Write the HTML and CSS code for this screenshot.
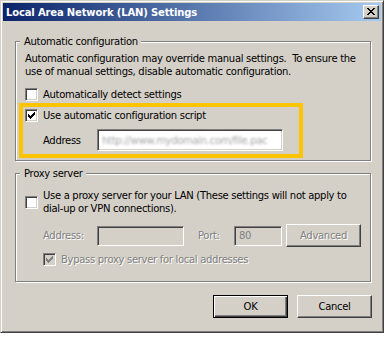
FILE: index.html
```html
<!DOCTYPE html>
<html>
<head>
<meta charset="utf-8">
<link rel="stylesheet" href="styles.css">
</head>
<body>
<div class="window">
  <div class="titlebar">
    <span class="title">Local Area Network (LAN) Settings</span>
    <span class="close"><svg width="8" height="7" viewBox="0 0 8 7" shape-rendering="crispEdges"><path d="M0 0h2v1H0zM6 0h2v1H6zM1 1h2v1H1zM5 1h2v1H5zM2 2h4v1H2zM3 3h2v1H3zM2 4h4v1H2zM1 5h2v1H1zM5 5h2v1H5zM0 6h2v1H0zM6 6h2v1H6z" fill="#000"/></svg></span>
  </div>
  <div class="content">
    <div class="group g1">
      <span class="legend">Automatic configuration</span>
      <p class="desc">Automatic configuration may override manual settings.&nbsp; To ensure the<br>use of manual settings, disable automatic configuration.</p>
      <div class="check row1"><span class="cb"></span><span>Automatically detect settings</span></div>
      <div class="highlight">
        <div class="check"><span class="cb"><svg width="7" height="7" viewBox="0 0 7 7" shape-rendering="crispEdges"><path d="M0 2H1V3H2V4H3V3H4V2H5V1H6V0H7V3H6V4H5V5H4V6H3V7H2V6H1V5H0Z" fill="#000"/></svg></span><span>Use automatic configuration script</span></div>
        <div class="addr">
          <span class="lbl">Address</span>
          <span class="input url"><span class="blur">http://www.mydomain.com/file.pac</span></span>
        </div>
      </div>
    </div>
    <div class="group g2">
      <span class="legend">Proxy server</span>
      <div class="check proxy"><span class="cb"></span><span>Use a proxy server for your LAN (These settings will not apply to<br>dial-up or VPN connections).</span></div>
      <div class="paddr">
        <span class="lbl dis">Address:</span>
        <span class="input off addrbox"></span>
        <span class="plbl dis">Port:</span>
        <span class="input off port"><span class="gray">80</span></span>
        <span class="btn adv"><span class="dis">Advanced</span></span>
      </div>
      <div class="check bypass"><span class="cb off"><svg width="7" height="7" viewBox="0 0 7 7" shape-rendering="crispEdges"><path d="M0 2H1V3H2V4H3V3H4V2H5V1H6V0H7V3H6V4H5V5H4V6H3V7H2V6H1V5H0Z" fill="#808080"/></svg></span><span class="dis">Bypass proxy server for local addresses</span></div>
    </div>
    <div class="buttons">
      <span class="btn default">OK</span>
      <span class="btn">Cancel</span>
    </div>
  </div>
</div>
</body>
</html>
```
FILE: styles.css
```css
body {
  margin: 0;
  background: #fff;
  font-family: "DejaVu Sans", sans-serif;
  font-size: 10px;
  letter-spacing: -0.3px;
  color: #000;
}
.window {
  width: 384px;
  height: 333px;
  box-sizing: border-box;
  background: #d4d0c8;
  border: 1px solid;
  border-color: #d4d0c8 #404040 #404040 #d4d0c8;
  box-shadow: inset 1px 1px #fff, inset -1px -1px #808080;
  padding: 2px;
  display: flex;
  flex-direction: column;
}
.titlebar {
  height: 18px;
  flex: none;
  background: linear-gradient(to right, #0a246a, #a6caf0);
  display: flex;
  align-items: center;
  justify-content: space-between;
  padding: 0 2px 0 3px;
}
.title {
  color: #fff;
  font-weight: bold;
  letter-spacing: -0.15px;
}
.close {
  width: 16px;
  height: 14px;
  box-sizing: border-box;
  background: #d4d0c8;
  border: 1px solid;
  border-color: #fff #404040 #404040 #fff;
  box-shadow: inset -1px -1px #808080;
  display: flex;
  justify-content: center;
  align-items: flex-start;
  padding-top: 2px;
}
.close svg { display: block; }
.content {
  flex: 1;
  display: flex;
  flex-direction: column;
  padding-left: 12px;
}
.group {
  width: 356px;
  box-sizing: border-box;
  border: 1px solid #808080;
  box-shadow: inset 1px 1px #fff, 1px 1px #fff;
  display: flex;
  flex-direction: column;
  align-items: flex-start;
  padding: 0 8px 0 9px;
}
.g1 { margin-top: 20px; height: 120px; }
.g2 { margin-top: 12px; height: 109px; }
.legend {
  margin: -7px 0 0 -5px;
  padding: 0 3px 0 4px;
  background: #d4d0c8;
  line-height: 13px;
  height: 13px;
}
.desc {
  margin: 4px 0 0;
  line-height: 13px;
}
.check {
  display: flex;
  align-items: center;
  gap: 5px;
  line-height: 13px;
}
.cb {
  width: 13px;
  height: 13px;
  box-sizing: border-box;
  flex: none;
  background: #fff;
  border: 1px solid;
  border-color: #808080 #fff #fff #808080;
  box-shadow: inset 1px 1px #404040, inset -1px -1px #d4d0c8;
  padding: 2px 0 0 2px;
}
.cb svg { display: block; }
.cb.off { background: #d4d0c8; }
.row1 { margin-top: 10px; }
.highlight {
  margin: 2px 0 0 -6px;
  width: 284px;
  box-sizing: border-box;
  border: 4px solid #ffc400;
  padding: 2px 0 3px 2px;
  display: flex;
  flex-direction: column;
}
.addr {
  display: flex;
  align-items: center;
  margin-top: 7px;
}
.lbl {
  margin-left: 18px;
  width: 54px;
}
.input {
  height: 22px;
  box-sizing: border-box;
  border: 1px solid;
  border-color: #808080 #fff #fff #808080;
  box-shadow: inset 1px 1px #404040, inset -1px -1px #d4d0c8;
  background: #fff;
  display: flex;
  align-items: center;
  padding: 0 4px;
}
.input.off { background: #d4d0c8; height: 20px; }
.url { width: 186px; }
.blur {
  color: #a4a4a4;
  filter: blur(0.8px);
  white-space: nowrap;
}
.gray { color: #808080; }
.dis {
  color: #808080;
  text-shadow: 1px 1px #fff;
}
.proxy { margin-top: 9px; }
.paddr {
  display: flex;
  align-items: center;
  margin-top: 9px;
}
.addrbox { width: 87px; }
.plbl { margin-left: 14px; width: 36px; }
.port { width: 48px; }
.adv { margin-left: 4px; }
.bypass { margin-top: 6px; margin-left: 18px; }
.buttons {
  display: flex;
  justify-content: flex-end;
  gap: 9px;
  width: 357px;
  margin-top: 13px;
}
.btn {
  width: 75px;
  height: 23px;
  box-sizing: border-box;
  border: 1px solid;
  border-color: #fff #404040 #404040 #fff;
  box-shadow: inset -1px -1px #808080;
  background: #d4d0c8;
  display: flex;
  align-items: center;
  justify-content: center;
}
.btn.default {
  border: 1px solid #000;
  box-shadow: inset 1px 1px #fff, inset -1px -1px #404040, inset -2px -2px #808080;
}
```
